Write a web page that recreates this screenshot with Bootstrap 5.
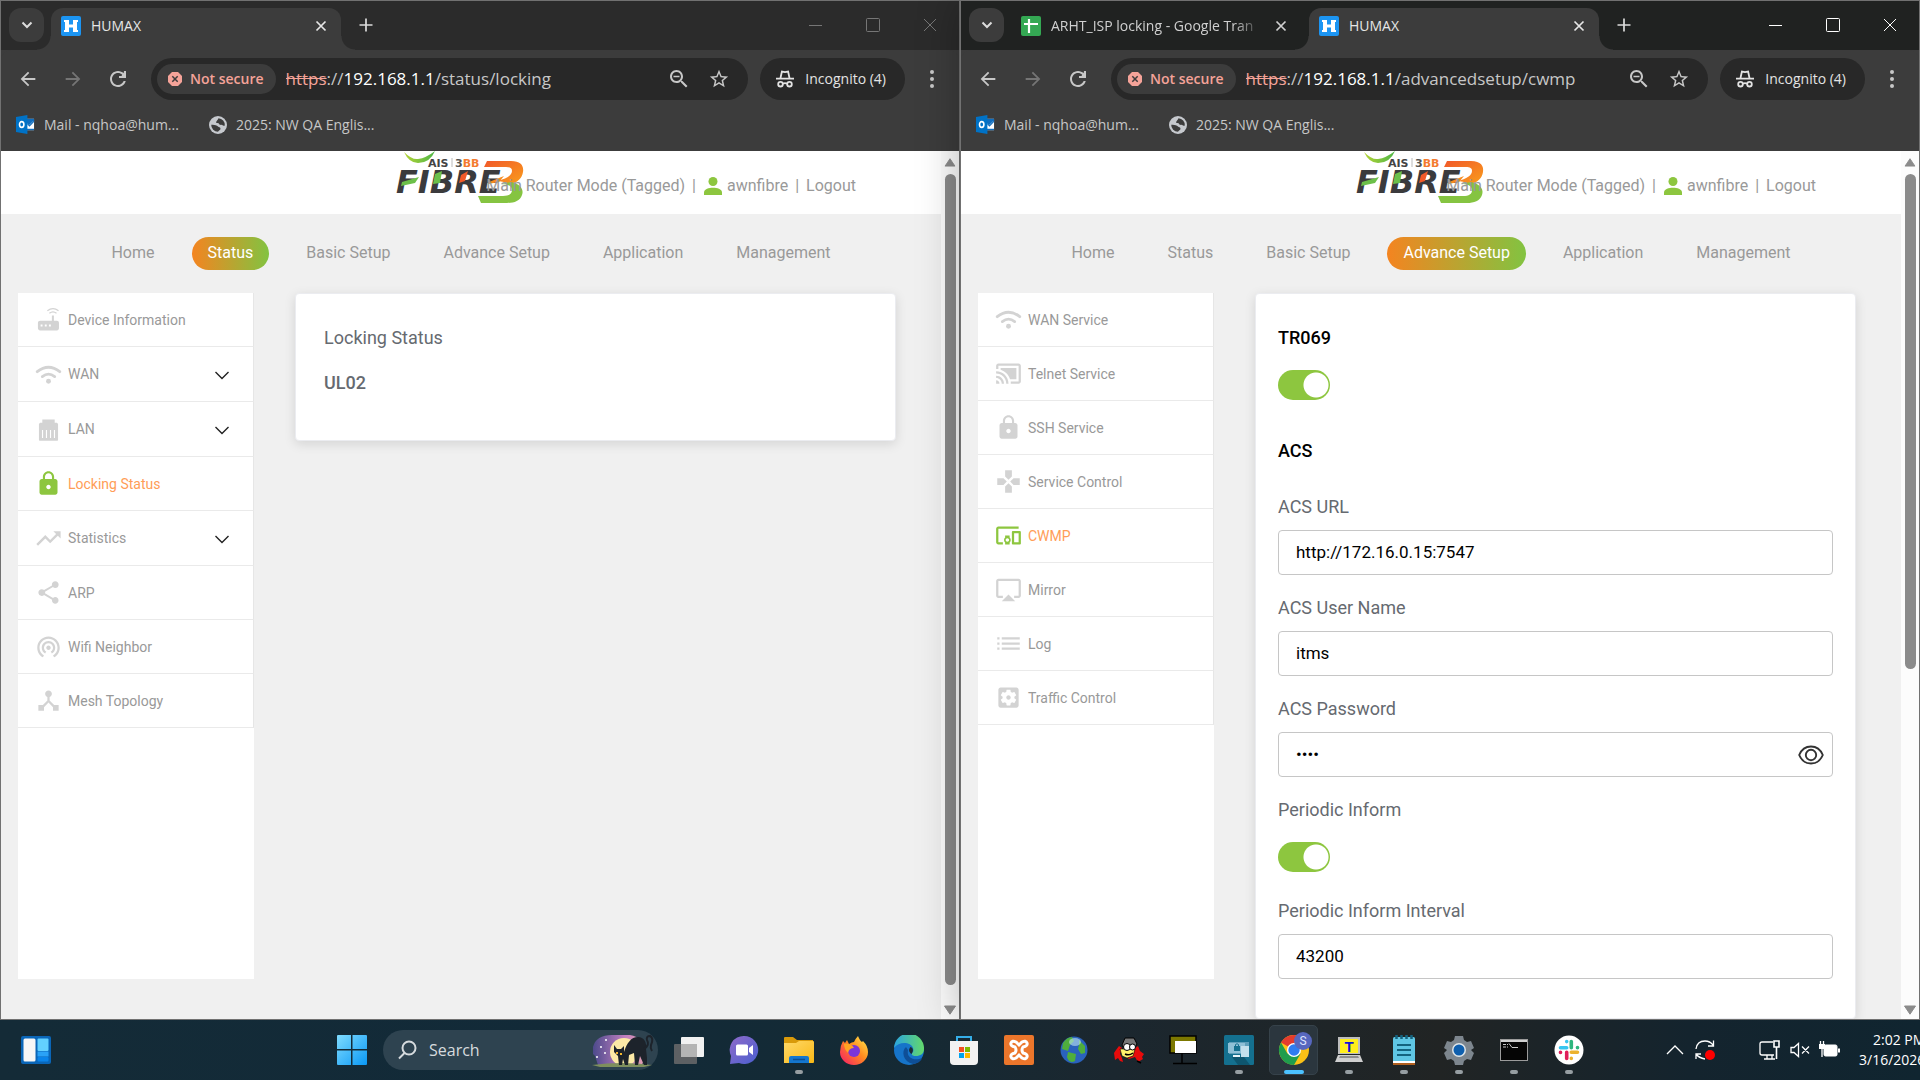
<!DOCTYPE html>
<html lang="en">
<head>
<meta charset="utf-8">
<meta name="viewport" content="width=device-width, initial-scale=1">
<title>HUMAX</title>
<link href="https://cdn.jsdelivr.net/npm/bootstrap@5.3.0/dist/css/bootstrap.min.css" rel="stylesheet">
<script src="https://cdn.jsdelivr.net/npm/bootstrap@5.3.0/dist/js/bootstrap.bundle.min.js" defer></script>
<style>
  body { font-family: Roboto, "Liberation Sans", sans-serif; background: #142a36; color: #999; }
  button { font-family: inherit; }
  .chrome-ui, .taskbar { font-family: "Open Sans", "Noto Sans", sans-serif; }
  .bare { background: none; border: 0; padding: 0; color: inherit; display: flex; align-items: center; justify-content: center; }
  .fill-rest { flex: 1 1 auto; min-height: 0; }

  /* browser windows */
  .window { flex: 1 1 0; min-width: 0; border: 1px solid #717171; background: #3c3c3c; }
  .window-front { z-index: 1; box-shadow: 0 0 40px rgba(0,0,0,.28); }
  .tab-strip { height: 49px; padding: 7px 1px 0 8px; background: #2b2b2b; color: #dcdcdc; }
  .window-front .tab-strip { background: #202221; }
  .tab-search { width: 35px; height: 34px; border-radius: 12px; background: #3c3c3c; margin-right: 7px; }
  .tab-item { width: 290px; height: 42px; padding: 0 12px 7px 10px; gap: 10px; font-size: 14px; line-height: 20px; color: #d0d0d0; margin-right: 8px; }
  .tab-item .tab-title { flex: 1; overflow: hidden; white-space: nowrap; }
  .tab-fade { -webkit-mask-image: linear-gradient(90deg, #000 86%, transparent); mask-image: linear-gradient(90deg, #000 86%, transparent); }
  .tab-current { background: #3c3c3c; border-radius: 12px 12px 0 0; color: #e6e6e6; position: relative; }
  .tab-current::before, .tab-current::after { content: ""; position: absolute; bottom: 0; width: 14px; height: 14px; }
  .tab-current::before { left: -14px; background: radial-gradient(circle at 0 0, transparent 13px, #3c3c3c 14px); }
  .tab-current::after { right: -14px; background: radial-gradient(circle at 100% 0, transparent 13px, #3c3c3c 14px); }
  .tab-close { width: 16px; height: 20px; }
  .new-tab { width: 20px; height: 34px; margin-left: 7px; }
  .win-ctl { width: 57px; height: 34px; color: #767676; }
  .window-front .win-ctl { color: #fff; }
  .toolbar-area { background: #3c3c3c; border-radius: 10px 10px 0 0; }
  .address-row { padding: 8px 18px 0 15px; color: #c7c7c7; }
  .tool-btn { width: 24px; height: 42px; margin-right: 21px; }
  .tool-dim { color: #757575; }
  .omnibox { height: 42px; border-radius: 21px; background: #282828; padding: 0 17px 0 6px; flex: 1; min-width: 0; }
  .chip { height: 30px; border-radius: 15px; background: #3c3c3c; color: #f5a399; font-size: 14px; line-height: 20px; font-weight: 600; padding: 0 12px 0 11px; gap: 8px; white-space: nowrap; }
  .url { font-size: 17px; line-height: 24px; color: #c7c7c7; margin-left: 10px; white-space: nowrap; flex: 1; overflow: hidden; }
  .url b { font-weight: 400; color: #fff; }
  .url s { color: #f5a399; }
  .incognito { height: 42px; border-radius: 21px; background: #282828; color: #e3e3e3; font-size: 14px; line-height: 20px; padding: 0 19px 0 16px; gap: 11px; margin: 0 18px 0 12px; white-space: nowrap; }
  .bookmarks { height: 51px; padding: 0 0 2px 15px; gap: 30px; font-size: 14px; line-height: 20px; }
  .bookmarks a { color: #c7c7c7; text-decoration: none; gap: 9px; white-space: nowrap; }

  /* router page */
  .router { background: #f0f0f0; flex: 1; min-width: 0; }
  .router-head { height: 63px; background: #fff; padding: 6px 85px 0; gap: 7px; font-size: 16px; line-height: 24px; position: relative; }
  .router-head a, .router-head span { color: #999; text-decoration: none; white-space: nowrap; position: relative; }
  .account { gap: 4px; }
  .brand-logo { position: absolute; left: 394px; top: 0; }
  .router-nav { padding: 23px 0; gap: 21px; flex-wrap: nowrap; }
  .router-nav .nav-link { height: 33px; padding: 4px 16px; border-radius: 17px; font-size: 16px; line-height: 24px; color: #999; white-space: nowrap; }
  .router-nav .nav-link.active { background: linear-gradient(90deg, #f48420, #82c341); color: #fff; }
  .router-body { padding: 0 45px 0 17px; gap: 41px; flex: 1; min-height: 0; }
  .side { width: 236px; background: #fff; margin-bottom: 40px; font-size: 14px; line-height: 20px; }
  .side a { height: 54px; padding: 0 23px 0 17px; gap: 6px; color: #999; text-decoration: none; border-bottom: 1px solid #eaeaea; border-right: 1px solid #e6e6e6; }
  .side a.has-sub { height: 55px; }
  .side svg { flex: none; color: #d3d3d3; }
  .side .chev { color: #222; margin-left: auto; }
  .side a.on { color: #ff9d57; }
  .side a.on svg { color: #8dc63f; }
  .panel { flex: 1; min-width: 0; background: #fff; border: 1px solid #ebecf0; border-radius: 4px; box-shadow: 0 3px 12px rgba(0,0,0,.12); color: #666a70; font-size: 18px; line-height: 24px; }
  .panel-lock { align-self: flex-start; padding: 32px 28px 45px; }
  .lock-title { margin-bottom: 21px; }
  .lock-value { font-weight: 500; }
  .panel-form { padding: 32px 22px 0; }
  .panel-form h2 { font-size: 18px; line-height: 24px; font-weight: 500; color: #000; margin: 0; }
  .field { height: 101px; }
  .field label { display: block; margin-bottom: 11px; }
  .field .switch-label { margin-bottom: 20px; }
  .field .form-control { height: 45px; border: 1px solid #c6c6c6; border-radius: 4px; padding: 0 17px 2px; font-size: 17px; line-height: 24px; color: #000; box-shadow: none; }
  .eye { position: absolute; right: 9px; top: 0; height: 45px; color: #333; }
  .onoff.form-check-input { display: block; width: 52px; height: 30px; margin: 0; border: 0; border-radius: 15px; background-color: #8dc63f; background-image: radial-gradient(circle at 38px 15px, #fff 12px, transparent 13px); background-size: auto; box-shadow: none; }
  .onoff.first-switch { margin: 20px 0 39px; }
  .acs-head { padding-bottom: 32px; }
  .scroll { width: 18px; background: #fcfcfc; padding: 7px 0 4px; color: #8b8b8b; }
  .scroll-track { flex: 1; margin: 7px 0 20px; }
  .thumb { width: 11px; height: 100%; border-radius: 6px; background: #8b8b8b; margin-left: 1px; }
  .thumb-half { height: 61%; }

  /* taskbar */
  .taskbar { height: 60px; z-index: 2; position: relative; background: linear-gradient(90deg, #142b37 0%, #122a38 30%, #142a35 45%, #1b272f 58%, #212424 75%, #14242e 88%, #102530 100%); }
  .task-end { flex: 1 1 0; min-width: 0; overflow: hidden; }
  .widgets { margin-left: 21px; }
  .start-cell { width: 55px; height: 60px; margin-right: 4px; }
  .task-search { width: 275px; height: 40px; border-radius: 20px; background: #2e4350; padding: 0 2px 0 14px; gap: 12px; margin-right: 3px; color: #d6dbde; }
  .task-search input { background: none; border: 0; width: 0; flex: 1; color: #d6dbde; font-size: 16px; line-height: 20px; padding: 0; outline: 0; }
  .task-search input::placeholder { color: #d6dbde; opacity: 1; }
  .app { width: 55px; height: 60px; position: relative; }
  .app.running::after { content: ""; position: absolute; left: 50%; bottom: 6px; width: 8px; height: 4px; margin-left: -4px; border-radius: 2px; background: #969ea2; }
  .app.focused::after { width: 20px; margin-left: -10px; background: #4cc2ff; }
  .focus-plate { position: absolute; left: 3px; top: 5px; width: 49px; height: 50px; border-radius: 5px; background: #2b363e; border: 1px solid #36424a; }
  .app svg { position: relative; }
  .tray { color: #fff; }
  .tray .bare { width: 30px; height: 40px; flex: none; }
  .tray .tray-first { margin-left: 64px; }
  .tray .tray-gap { margin-right: 35px; }
  .clock { flex: none; margin-left: 14px; font-size: 14px; line-height: 20px; text-align: right; white-space: nowrap; }
</style>
</head>
<body>
<svg width="0" height="0" class="position-absolute" aria-hidden="true">
  <defs>
    <linearGradient id="gGreen" x1="0" y1="0" x2="1" y2="0"><stop offset="0" stop-color="#b5d334"/><stop offset="1" stop-color="#4db748"/></linearGradient>
    <linearGradient id="gOrange" x1="0" y1="0" x2="1" y2="1"><stop offset="0" stop-color="#f1592a"/><stop offset="1" stop-color="#f99d1c"/></linearGradient>
    <linearGradient id="gWin" x1="0" y1="0" x2="1" y2="1"><stop offset="0" stop-color="#7fdcff"/><stop offset="1" stop-color="#0a98f5"/></linearGradient>
    <linearGradient id="gEdge" x1="0" y1="0" x2="1" y2="0"><stop offset="0" stop-color="#2ba4e0"/><stop offset="1" stop-color="#63d96a"/></linearGradient>
    <linearGradient id="gFox" x1="1" y1="0" x2="0" y2="1"><stop offset="0" stop-color="#fff14f"/><stop offset=".45" stop-color="#ff8a1f"/><stop offset="1" stop-color="#f5156c"/></linearGradient>
    <linearGradient id="gMoon" x1="0" y1="0" x2="1" y2="0"><stop offset="0" stop-color="#4d4a8c"/><stop offset=".6" stop-color="#c07fc0"/><stop offset="1" stop-color="#e8a3b0"/></linearGradient>
    <linearGradient id="gChat" x1="0" y1="0" x2="1" y2="1"><stop offset="0" stop-color="#8f6ac9"/><stop offset="1" stop-color="#4a5fd0"/></linearGradient>
    <linearGradient id="gFolder" x1="0" y1="0" x2="1" y2="1"><stop offset="0" stop-color="#ffd868"/><stop offset="1" stop-color="#f9b916"/></linearGradient>
  </defs>
  <symbol id="i-chev" viewBox="0 0 16 16"><path d="M1.500 6l6.500 6.500L14.500 6" fill="none" stroke="currentColor" stroke-width="1.400"/></symbol>
  <symbol id="i-tabchev" viewBox="0 0 12 12"><path d="M1.500 3.500L6 8l4.500-4.500" fill="none" stroke="currentColor" stroke-width="2"/></symbol>
  <symbol id="i-x" viewBox="0 0 12 12"><path d="M1.500 1.500l9 9M10.500 1.500l-9 9" stroke="currentColor" stroke-width="1.700"/></symbol>
  <symbol id="i-plus" viewBox="0 0 14 14"><path d="M7 .5v13M.5 7h13" stroke="currentColor" stroke-width="1.700"/></symbol>
  <symbol id="i-humax" viewBox="0 0 20 20"><rect width="20" height="20" rx="2" fill="#1c95f3"/><path d="M3 4h5v4.500h4V4h5v2h-1v8h1v2h-5v-4.500H8V16H3v-2h1V6H3z" fill="#fff"/></symbol>
  <symbol id="i-sheet" viewBox="0 0 20 20"><rect width="20" height="20" rx="2" fill="#34a853"/><path d="M8 3v14M3 8h14" stroke="#fff" stroke-width="2.200"/></symbol>
  <symbol id="i-back" viewBox="0 0 24 24"><path fill="currentColor" d="M20 11H7.830l5.590-5.590L12 4l-8 8 8 8 1.410-1.410L7.830 13H20v-2z"/></symbol>
  <symbol id="i-reload" viewBox="0 0 24 24"><path fill="currentColor" d="M17.650 6.350C16.200 4.900 14.210 4 12 4c-4.420 0-7.990 3.580-7.990 8s3.570 8 7.990 8c3.730 0 6.840-2.550 7.730-6h-2.080c-.82 2.330-3.040 4-5.650 4-3.310 0-6-2.690-6-6s2.690-6 6-6c1.660 0 3.140.69 4.220 1.780L15.500 9H13v2h7V4h-2z"/></symbol>
  <symbol id="i-notsec" viewBox="0 0 14 14"><path d="M4 0h6l4 4v6l-4 4H4l-4-4V4z" fill="currentColor"/><path d="M4.300 4.300l5.400 5.400M9.700 4.300L4.300 9.700" stroke="#3c3c3c" stroke-width="1.500"/></symbol>
  <symbol id="i-zoomout" viewBox="0 0 24 24"><path fill="currentColor" d="M15.500 14h-.79l-.28-.27C15.410 12.590 16 11.110 16 9.500 16 5.910 13.090 3 9.500 3S3 5.910 3 9.500 5.910 16 9.500 16c1.610 0 3.090-.59 4.230-1.570l.27.28v.79l5 4.990L20.490 19l-4.990-5zm-6 0C7.010 14 5 11.990 5 9.500S7.010 5 9.500 5 14 7.010 14 9.500 11.990 14 9.500 14zM6.500 8.700h6v1.600h-6z"/></symbol>
  <symbol id="i-star" viewBox="0 0 24 24"><path fill="currentColor" d="M22 9.240l-7.190-.62L12 2 9.190 8.630 2 9.240l5.460 4.730L5.820 21 12 17.270 18.180 21l-1.630-7.030L22 9.240zM12 15.400l-3.760 2.270 1-4.280-3.320-2.880 4.380-.38L12 6.100l1.710 4.040 4.380.38-3.320 2.880 1 4.280L12 15.400z"/></symbol>
  <symbol id="i-incog" viewBox="0 0 18 18"><g fill="none" stroke="currentColor" stroke-width="1.800"><path d="M4.500 8L5.900 1.600l3.100.6 3.100-.6L13.500 8M0 8.700h18"/><circle cx="4.500" cy="14.200" r="2.300"/><circle cx="13.500" cy="14.200" r="2.300"/><path d="M6.800 13.600q2.200-1 4.400 0"/></g></symbol>
  <symbol id="i-outlook" viewBox="0 0 20 20"><path d="M10 4h9v12h-9z" fill="#fff"/><path d="M10 4h9v1.500l-5 5-4-3z" fill="#0f6cbd"/><path d="M12 9l2.200 2.500L19 6.500" stroke="#0f6cbd" stroke-width="1.300" fill="none"/><path d="M10 14.500h9V16h-9z" fill="#0f6cbd"/><path d="M0 2.200L12 0v20L0 17.800z" fill="#0072c6"/><ellipse cx="6" cy="10" rx="2.300" ry="3" fill="none" stroke="#fff" stroke-width="1.700"/></symbol>
  <symbol id="i-globe" viewBox="0 0 18 18"><circle cx="9" cy="9" r="9" fill="#c6c9ce"/><path d="M9.500 2.200a6.800 6.800 0 0 1 6.300 7.300c-1 .5-2 .2-2.800-.7-1.500.4-3-.2-3.300-1.600L7 6.800C7.200 5 8.800 4 9.500 2.200zM2.200 8.800c2.200-.5 5.500.2 6.800 1.700.6 1 2.500.6 2.500 2.200 0 1.500-2 1.500-2.500 3.100A6.900 6.900 0 0 1 2.200 8.800z" fill="#3c3c3c"/></symbol>
  <symbol id="i-user" viewBox="0 0 18 18"><circle cx="9" cy="4.500" r="4.500" fill="#8dc63f"/><path d="M0 18v-2.500C0 12 5 10.800 9 10.800s9 1.200 9 4.700V18z" fill="#8dc63f"/></symbol>
  <symbol id="i-up" viewBox="0 0 12 10"><path d="M6 .8L11.500 9H.5z" fill="currentColor" stroke="currentColor" stroke-linejoin="round"/></symbol>
  <symbol id="i-down" viewBox="0 0 12 10"><path d="M6 9.200L.5 1h11z" fill="currentColor" stroke="currentColor" stroke-linejoin="round"/></symbol>
  <symbol id="i-router" viewBox="0 0 24 24"><path fill="currentColor" d="M4.500 13H15V8.500h1.800V13h2.700c1 0 1.800.8 1.800 1.800v5c0 1-.8 1.900-1.800 1.900h-15c-1 0-1.900-.9-1.900-1.900v-5c0-1 .9-1.800 1.900-1.800zM5 16.500v1.700h1.700v-1.700zm3.700 0v1.700h1.700v-1.700zm3.700 0v1.700h1.700v-1.700z"/><path d="M11 4.300q5-4 9.900 0M12.800 6.400q3.200-2.500 6.300 0" fill="none" stroke="currentColor" stroke-width="1.100"/></symbol>
  <symbol id="i-wifi" viewBox="0 0 24 24"><g fill="none" stroke="currentColor" stroke-width="2.500" stroke-linecap="round"><path d="M2 9.500q10-8 20 0"/><path d="M6.500 13.800q5.500-4.300 11 0"/></g><circle cx="12" cy="18" r="2.200" fill="currentColor"/></symbol>
  <symbol id="i-lan" viewBox="0 0 24 24"><path fill="currentColor" d="M6.500 3h11v3h2l1 1v14c0 .6-.4 1-1 1h-15c-.6 0-1-.4-1-1V7l1-1h2z"/><path d="M6.700 12.500v7M10.200 12.500v7M13.800 12.500v7M17.300 12.500v7" stroke="#fff" stroke-width="1"/></symbol>
  <symbol id="i-lock" viewBox="0 0 24 24"><path fill="currentColor" d="M18 8h-1V6c0-2.760-2.240-5-5-5S7 3.240 7 6v2H6c-1.100 0-2 .9-2 2v10c0 1.100.9 2 2 2h12c1.100 0 2-.9 2-2V10c0-1.100-.9-2-2-2zm-6 9c-1.100 0-2-.9-2-2s.9-2 2-2 2 .9 2 2-.9 2-2 2zm3.100-9H8.900V6c0-1.710 1.390-3.100 3.100-3.100 1.710 0 3.100 1.390 3.100 3.100v2z"/></symbol>
  <symbol id="i-trend" viewBox="0 0 24 24"><path fill="currentColor" d="M16 6l2.290 2.290-4.880 4.880-4-4L2 16.590 3.410 18l6-6 4 4 6.300-6.290L22 12V6z" transform="translate(-1 -1) scale(1.080)"/></symbol>
  <symbol id="i-share" viewBox="0 0 24 24"><path fill="currentColor" d="M18 16.080c-.76 0-1.440.3-1.960.77L8.910 12.700c.05-.23.09-.46.09-.7s-.04-.47-.09-.7l7.050-4.110c.54.5 1.250.81 2.040.81 1.660 0 3-1.340 3-3s-1.340-3-3-3-3 1.340-3 3c0 .24.04.47.09.7L8.040 9.810C7.500 9.310 6.790 9 6 9c-1.660 0-3 1.340-3 3s1.340 3 3 3c.79 0 1.500-.31 2.040-.81l7.120 4.160c-.05.21-.08.43-.08.65 0 1.610 1.310 2.920 2.920 2.920 1.610 0 2.920-1.310 2.920-2.920s-1.310-2.920-2.920-2.920z"/></symbol>
  <symbol id="i-tether" viewBox="0 0 24 24"><path fill="currentColor" d="M12 11c-1.100 0-2 .9-2 2s.9 2 2 2 2-.9 2-2-.9-2-2-2zm6 2c0-3.310-2.690-6-6-6s-6 2.690-6 6c0 2.220 1.210 4.150 3 5.190l1-1.740c-1.190-.7-2-1.970-2-3.450 0-2.210 1.790-4 4-4s4 1.790 4 4c0 1.480-.81 2.750-2 3.450l1 1.740c1.790-1.040 3-2.970 3-5.190zM12 3C6.480 3 2 7.480 2 13c0 3.700 2.010 6.920 4.990 8.650l1-1.730C5.610 18.530 4 15.960 4 13c0-4.420 3.580-8 8-8s8 3.580 8 8c0 2.960-1.610 5.530-4 6.920l1 1.730c2.990-1.730 5-4.950 5-8.650 0-5.520-4.480-10-10-10z"/></symbol>
  <symbol id="i-hub" viewBox="0 0 24 24"><path fill="currentColor" d="M17 16l-4-4V8.820C14.160 8.400 15 7.300 15 6c0-1.660-1.340-3-3-3S9 4.340 9 6c0 1.300.84 2.400 2 2.820V12l-4 4H3v5h5v-3.050l4-4.200 4 4.200V21h5v-5h-4z"/></symbol>
  <symbol id="i-cast" viewBox="0 0 24 24"><path fill="currentColor" d="M1 18v3h3c0-1.660-1.340-3-3-3zm0-4v2c2.760 0 5 2.240 5 5h2c0-3.870-3.130-7-7-7zm18-7H5v1.630c3.960 1.280 7.090 4.410 8.370 8.370H19V7zM1 10v2c4.970 0 9 4.030 9 9h2c0-6.080-4.930-11-11-11zm20-7H3c-1.100 0-2 .9-2 2v3h2V5h18v14h-7v2h7c1.100 0 2-.9 2-2V5c0-1.100-.9-2-2-2z"/></symbol>
  <symbol id="i-pad" viewBox="0 0 24 24"><path fill="currentColor" d="M15 7.500V2H9v5.500l3 3 3-3zM7.500 9H2v6h5.500l3-3-3-3zM9 16.500V22h6v-5.500l-3-3-3 3zM16.500 9l-3 3 3 3H22V9h-5.500z"/></symbol>
  <symbol id="i-devices" viewBox="0 0 24 24"><path fill="currentColor" d="M3 6h18V4H3c-1.100 0-2 .9-2 2v12c0 1.100.9 2 2 2h4v-2H3V6zm10 6H9v1.780c-.61.550-1 1.330-1 2.220s.39 1.670 1 2.220V20h4v-1.780c.61-.55 1-1.340 1-2.220s-.39-1.670-1-2.220V12zm-2 5.500c-.83 0-1.500-.67-1.500-1.500s.67-1.500 1.500-1.500 1.500.67 1.500 1.500-.67 1.500-1.500 1.500zM22 8h-6c-.5 0-1 .5-1 1v10c0 .5.5 1 1 1h6c.5 0 1-.5 1-1V9c0-.5-.5-1-1-1zm-1 10h-4v-8h4v8z"/></symbol>
  <symbol id="i-mirror" viewBox="0 0 24 24"><path fill="currentColor" d="M6 22.500h12l-6-6zM21 2.500H3c-1.100 0-2 .9-2 2v13c0 1.100.9 2 2 2h4v-2H3v-13h18v13h-4v2h4c1.100 0 2-.9 2-2v-13c0-1.100-.9-2-2-2z"/></symbol>
  <symbol id="i-list" viewBox="0 0 24 24"><path fill="currentColor" d="M2 13h2v-2H2v2zm0 4.500h2v-2H2v2zM2 8.500h2v-2H2v2zM6 13h16v-2H6v2zm0 4.500h16v-2H6v2zM6 6.500v2h16v-2H6z"/></symbol>
  <symbol id="i-cog" viewBox="0 0 24 24"><path fill="currentColor" d="M12 10c-1.100 0-2 .9-2 2s.9 2 2 2 2-.9 2-2-.9-2-2-2zm7-7H5c-1.110 0-2 .9-2 2v14c0 1.100.89 2 2 2h14c1.110 0 2-.9 2-2V5c0-1.100-.89-2-2-2zm-1.750 9c0 .23-.02.46-.05.68l1.480 1.160c.13.11.17.3.08.45l-1.400 2.420c-.09.15-.27.21-.43.15l-1.740-.7c-.36.28-.76.51-1.180.69l-.26 1.850c-.03.17-.18.3-.35.3h-2.800c-.17 0-.32-.13-.35-.29l-.26-1.850c-.43-.18-.82-.41-1.180-.69l-1.740.7c-.16.06-.34 0-.43-.15l-1.400-2.420c-.09-.15-.05-.34.08-.45l1.480-1.160c-.03-.23-.05-.46-.05-.69 0-.23.02-.46.05-.68l-1.480-1.160c-.13-.11-.17-.3-.08-.45l1.400-2.420c.09-.15.27-.21.43-.15l1.740.7c.36-.28.76-.51 1.180-.69l.26-1.850c.03-.17.18-.3.35-.3h2.800c.17 0 .32.13.35.29l.26 1.850c.43.18.82.41 1.180.69l1.740-.7c.16-.06.34 0 .43.15l1.400 2.420c.09.15.05.34-.08.45l-1.480 1.160c.03.23.05.46.05.69z"/></symbol>
  <symbol id="i-eye" viewBox="0 0 26 20"><g fill="none" stroke="currentColor" stroke-width="1.900"><path d="M1.200 10C3.500 4.500 8 1.500 13 1.500S22.500 4.500 24.800 10C22.500 15.500 18 18.500 13 18.500S3.500 15.500 1.200 10z"/><circle cx="13" cy="10" r="5.200"/></g></symbol>
  <symbol id="logo-swoosh" viewBox="0 0 134 56">
    <path d="M9 1q8 8 14 7Q31 7 40 0q-5 12-17 12Q14 12 9 1z" fill="url(#gGreen)"/>
    <path d="M57 7v9" stroke="#bbb" stroke-width="1"/>
    <path d="M92 10h24c10 0 13 5 12 11-1 6-5 10-12 12-6-2-11-3-14-3 10-2 15-6 15-10 0-3-2-4-6-4H89z" fill="url(#gOrange)"/>
    <path d="M116 31c10 2 13 8 11 13-2 6-8 8-15 8H86l-3-7h25c6 0 9-2 9-6s-4-6-11-6z" fill="#85c441"/>
  </symbol>
  <symbol id="logo-accents" viewBox="0 0 134 56">
    <path d="M7 31l17-5-4 6-14 3z" fill="#6cc04a"/><path d="M40 23l7-3-2 12-7 1z" fill="#6cc04a"/><path d="M66 24l7-4-3 10-6 2z" fill="#f15a29"/><path d="M94 31l15-6-5 6-11 2z" fill="#f68b1f"/>
  </symbol>
</svg>

<div class="vh-100 d-flex flex-column overflow-hidden">
  <main class="d-flex fill-rest">

    <!-- left browser window -->
    <section class="window d-flex flex-column" aria-label="Locking status window">
      <div class="chrome-ui">
        <div class="tab-strip d-flex">
          <button class="bare tab-search" aria-label="Search tabs"><svg width="12" height="12"><use href="#i-tabchev"/></svg></button>
          <div class="tab-item tab-current d-flex align-items-center">
            <svg width="20" height="20"><use href="#i-humax"/></svg><span class="tab-title">HUMAX</span>
            <button class="bare tab-close" aria-label="Close tab"><svg width="12" height="12"><use href="#i-x"/></svg></button>
          </div>
          <button class="bare new-tab" aria-label="New tab"><svg width="14" height="14"><use href="#i-plus"/></svg></button>
          <div class="d-flex ms-auto">
            <button class="bare win-ctl" aria-label="Minimize"><svg width="13" height="13"><path d="M0 6.500h13" stroke="currentColor"/></svg></button>
            <button class="bare win-ctl" aria-label="Maximize"><svg width="14" height="14"><rect x=".5" y=".5" width="13" height="13" rx="1" fill="none" stroke="currentColor"/></svg></button>
            <button class="bare win-ctl" aria-label="Close"><svg width="14" height="14"><path d="M1 1l12 12M13 1L1 13" stroke="currentColor"/></svg></button>
          </div>
        </div>
        <div class="toolbar-area">
          <div class="address-row d-flex">
            <button class="bare tool-btn" aria-label="Back"><svg width="22" height="22"><use href="#i-back"/></svg></button>
            <button class="bare tool-btn tool-dim" aria-label="Forward"><svg width="22" height="22" viewBox="0 0 22 22"><g transform="translate(22 0) scale(-1 1)"><use href="#i-back" width="22" height="22"/></g></svg></button>
            <button class="bare tool-btn" aria-label="Reload"><svg width="24" height="24"><use href="#i-reload"/></svg></button>
            <div class="omnibox d-flex align-items-center">
              <button class="bare chip"><svg width="14" height="14"><use href="#i-notsec"/></svg>Not secure</button>
              <div class="url"><s>https</s>://<b>192.168.1.1</b>/status/locking</div>
              <button class="bare me-3" aria-label="Zoom"><svg width="24" height="24"><use href="#i-zoomout"/></svg></button>
              <button class="bare" aria-label="Bookmark"><svg width="24" height="22"><use href="#i-star"/></svg></button>
            </div>
            <button class="bare incognito"><svg width="18" height="18"><use href="#i-incog"/></svg>Incognito (4)</button>
            <button class="bare" aria-label="Menu"><svg width="18" height="18" fill="currentColor"><circle cx="9" cy="2" r="2"/><circle cx="9" cy="9" r="2"/><circle cx="9" cy="16" r="2"/></svg></button>
          </div>
          <div class="bookmarks d-flex align-items-center">
            <a href="#" class="d-flex align-items-center"><svg width="19" height="19"><use href="#i-outlook"/></svg>Mail - nqhoa@hum...</a>
            <a href="#" class="d-flex align-items-center"><svg width="18" height="18"><use href="#i-globe"/></svg>2025: NW QA Englis...</a>
          </div>
        </div>
      </div>
      <div class="d-flex fill-rest">
        <div class="router d-flex flex-column overflow-hidden">
          <header class="router-head d-flex align-items-center justify-content-end">
            <svg class="brand-logo" width="134" height="56" role="img" aria-label="AIS 3BB FIBRE3">
              <use href="#logo-swoosh"/>
              <g font-family="DejaVu Sans" font-weight="700" font-size="11"><text x="33" y="16" fill="#444">AIS</text><text x="60" y="16" fill="#555">3<tspan fill="#f47b30">BB</tspan></text></g>
              <text x="1" y="42" font-family="DejaVu Sans" font-style="italic" font-weight="700" font-size="32" fill="#3b3b3d">FIBRE</text>
              <use href="#logo-accents"/>
            </svg>
            <span>Main Router Mode (Tagged)</span><span>|</span>
            <a href="#" class="account d-flex align-items-center"><svg width="20" height="18"><use href="#i-user"/></svg>awnfibre</a><span>|</span><a href="#">Logout</a>
          </header>
          <nav class="nav nav-pills router-nav justify-content-center">
            <a class="nav-link" href="#">Home</a><a class="nav-link active" href="#">Status</a><a class="nav-link" href="#">Basic Setup</a><a class="nav-link" href="#">Advance Setup</a><a class="nav-link" href="#">Application</a><a class="nav-link" href="#">Management</a>
          </nav>
          <div class="router-body d-flex">
            <nav class="side flex-shrink-0">
              <a href="#" class="d-flex align-items-center"><svg width="27" height="27"><use href="#i-router"/></svg>Device Information</a>
              <a href="#" class="has-sub d-flex align-items-center"><svg width="27" height="27"><use href="#i-wifi"/></svg>WAN<svg class="chev" width="16" height="16"><use href="#i-chev"/></svg></a>
              <a href="#" class="has-sub d-flex align-items-center"><svg width="27" height="27"><use href="#i-lan"/></svg>LAN<svg class="chev" width="16" height="16"><use href="#i-chev"/></svg></a>
              <a href="#" class="on d-flex align-items-center"><svg width="27" height="27"><use href="#i-lock"/></svg>Locking Status</a>
              <a href="#" class="has-sub d-flex align-items-center"><svg width="27" height="27"><use href="#i-trend"/></svg>Statistics<svg class="chev" width="16" height="16"><use href="#i-chev"/></svg></a>
              <a href="#" class="d-flex align-items-center"><svg width="27" height="27"><use href="#i-share"/></svg>ARP</a>
              <a href="#" class="d-flex align-items-center"><svg width="27" height="27"><use href="#i-tether"/></svg>Wifi Neighbor</a>
              <a href="#" class="d-flex align-items-center"><svg width="27" height="27"><use href="#i-hub"/></svg>Mesh Topology</a>
            </nav>
            <div class="panel panel-lock">
              <div class="lock-title">Locking Status</div>
              <div class="lock-value">UL02</div>
            </div>
          </div>
        </div>
        <div class="scroll d-flex flex-column align-items-center" aria-hidden="true">
          <svg width="12" height="9"><use href="#i-up"/></svg><div class="scroll-track"><div class="thumb"></div></div><svg width="12" height="10"><use href="#i-down"/></svg>
        </div>
      </div>
    </section>

    <!-- right browser window -->
    <section class="window window-front d-flex flex-column" aria-label="CWMP window">
      <div class="chrome-ui">
        <div class="tab-strip d-flex">
          <button class="bare tab-search" aria-label="Search tabs"><svg width="12" height="12"><use href="#i-tabchev"/></svg></button>
          <div class="tab-item d-flex align-items-center">
            <svg width="20" height="20"><use href="#i-sheet"/></svg><span class="tab-title tab-fade">ARHT_ISP locking - Google Tran</span>
            <button class="bare tab-close" aria-label="Close tab"><svg width="12" height="12"><use href="#i-x"/></svg></button>
          </div>
          <div class="tab-item tab-current d-flex align-items-center">
            <svg width="20" height="20"><use href="#i-humax"/></svg><span class="tab-title">HUMAX</span>
            <button class="bare tab-close" aria-label="Close tab"><svg width="12" height="12"><use href="#i-x"/></svg></button>
          </div>
          <button class="bare new-tab" aria-label="New tab"><svg width="14" height="14"><use href="#i-plus"/></svg></button>
          <div class="d-flex ms-auto">
            <button class="bare win-ctl" aria-label="Minimize"><svg width="13" height="13"><path d="M0 6.500h13" stroke="currentColor"/></svg></button>
            <button class="bare win-ctl" aria-label="Maximize"><svg width="14" height="14"><rect x=".5" y=".5" width="13" height="13" rx="1" fill="none" stroke="currentColor"/></svg></button>
            <button class="bare win-ctl" aria-label="Close"><svg width="14" height="14"><path d="M1 1l12 12M13 1L1 13" stroke="currentColor"/></svg></button>
          </div>
        </div>
        <div class="toolbar-area">
          <div class="address-row d-flex">
            <button class="bare tool-btn" aria-label="Back"><svg width="22" height="22"><use href="#i-back"/></svg></button>
            <button class="bare tool-btn tool-dim" aria-label="Forward"><svg width="22" height="22" viewBox="0 0 22 22"><g transform="translate(22 0) scale(-1 1)"><use href="#i-back" width="22" height="22"/></g></svg></button>
            <button class="bare tool-btn" aria-label="Reload"><svg width="24" height="24"><use href="#i-reload"/></svg></button>
            <div class="omnibox d-flex align-items-center">
              <button class="bare chip"><svg width="14" height="14"><use href="#i-notsec"/></svg>Not secure</button>
              <div class="url"><s>https</s>://<b>192.168.1.1</b>/advancedsetup/cwmp</div>
              <button class="bare me-3" aria-label="Zoom"><svg width="24" height="24"><use href="#i-zoomout"/></svg></button>
              <button class="bare" aria-label="Bookmark"><svg width="24" height="22"><use href="#i-star"/></svg></button>
            </div>
            <button class="bare incognito"><svg width="18" height="18"><use href="#i-incog"/></svg>Incognito (4)</button>
            <button class="bare" aria-label="Menu"><svg width="18" height="18" fill="currentColor"><circle cx="9" cy="2" r="2"/><circle cx="9" cy="9" r="2"/><circle cx="9" cy="16" r="2"/></svg></button>
          </div>
          <div class="bookmarks d-flex align-items-center">
            <a href="#" class="d-flex align-items-center"><svg width="19" height="19"><use href="#i-outlook"/></svg>Mail - nqhoa@hum...</a>
            <a href="#" class="d-flex align-items-center"><svg width="18" height="18"><use href="#i-globe"/></svg>2025: NW QA Englis...</a>
          </div>
        </div>
      </div>
      <div class="d-flex fill-rest">
        <div class="router d-flex flex-column overflow-hidden">
          <header class="router-head d-flex align-items-center justify-content-end">
            <svg class="brand-logo" width="134" height="56" role="img" aria-label="AIS 3BB FIBRE3">
              <use href="#logo-swoosh"/>
              <g font-family="DejaVu Sans" font-weight="700" font-size="11"><text x="33" y="16" fill="#444">AIS</text><text x="60" y="16" fill="#555">3<tspan fill="#f47b30">BB</tspan></text></g>
              <text x="1" y="42" font-family="DejaVu Sans" font-style="italic" font-weight="700" font-size="32" fill="#3b3b3d">FIBRE</text>
              <use href="#logo-accents"/>
            </svg>
            <span>Main Router Mode (Tagged)</span><span>|</span>
            <a href="#" class="account d-flex align-items-center"><svg width="20" height="18"><use href="#i-user"/></svg>awnfibre</a><span>|</span><a href="#">Logout</a>
          </header>
          <nav class="nav nav-pills router-nav justify-content-center">
            <a class="nav-link" href="#">Home</a><a class="nav-link" href="#">Status</a><a class="nav-link" href="#">Basic Setup</a><a class="nav-link active" href="#">Advance Setup</a><a class="nav-link" href="#">Application</a><a class="nav-link" href="#">Management</a>
          </nav>
          <div class="router-body d-flex">
            <nav class="side flex-shrink-0">
              <a href="#" class="d-flex align-items-center"><svg width="27" height="27"><use href="#i-wifi"/></svg>WAN Service</a>
              <a href="#" class="d-flex align-items-center"><svg width="27" height="27"><use href="#i-cast"/></svg>Telnet Service</a>
              <a href="#" class="d-flex align-items-center"><svg width="27" height="27"><use href="#i-lock"/></svg>SSH Service</a>
              <a href="#" class="d-flex align-items-center"><svg width="27" height="27"><use href="#i-pad"/></svg>Service Control</a>
              <a href="#" class="on d-flex align-items-center"><svg width="27" height="27"><use href="#i-devices"/></svg>CWMP</a>
              <a href="#" class="d-flex align-items-center"><svg width="27" height="27"><use href="#i-mirror"/></svg>Mirror</a>
              <a href="#" class="d-flex align-items-center"><svg width="27" height="27"><use href="#i-list"/></svg>Log</a>
              <a href="#" class="d-flex align-items-center"><svg width="27" height="27"><use href="#i-cog"/></svg>Traffic Control</a>
            </nav>
            <form class="panel panel-form">
              <h2 id="tr">TR069</h2>
              <input class="form-check-input onoff first-switch" type="checkbox" role="switch" checked aria-labelledby="tr">
              <h2 class="acs-head">ACS</h2>
              <div class="field"><label for="f-url">ACS URL</label><input id="f-url" class="form-control" type="text" value="http://172.16.0.15:7547"></div>
              <div class="field"><label for="f-user">ACS User Name</label><input id="f-user" class="form-control" type="text" value="itms"></div>
              <div class="field"><label for="f-pass">ACS Password</label>
                <div class="position-relative"><input id="f-pass" class="form-control" type="password" value="itms"><button type="button" class="bare eye" aria-label="Show password"><svg width="26" height="20"><use href="#i-eye"/></svg></button></div></div>
              <div class="field"><label for="f-per" class="switch-label">Periodic Inform</label><input id="f-per" class="form-check-input onoff" type="checkbox" role="switch" checked></div>
              <div class="field"><label for="f-int">Periodic Inform Interval</label><input id="f-int" class="form-control" type="text" value="43200"></div>
            </form>
          </div>
        </div>
        <div class="scroll d-flex flex-column align-items-center" aria-hidden="true">
          <svg width="12" height="9"><use href="#i-up"/></svg><div class="scroll-track"><div class="thumb thumb-half"></div></div><svg width="12" height="10"><use href="#i-down"/></svg>
        </div>
      </div>
    </section>
  </main>

  <footer class="taskbar d-flex align-items-center flex-shrink-0">
    <div class="task-end d-flex">
      <button class="bare widgets" aria-label="Widgets"><svg width="30" height="28"><rect width="30" height="28" rx="2" fill="#0a66b8"/><rect x="2.500" y="2.500" width="12" height="23" rx="1.500" fill="#f6f6f6"/><rect x="16.500" y="2.500" width="11" height="12.500" rx="1" fill="#63d0ff"/><rect x="16.500" y="15.500" width="11" height="5" fill="#2aa2f7"/><rect x="16.500" y="21" width="11" height="4.500" rx="1" fill="#0a84ea"/></svg></button>
    </div>
    <button class="bare start-cell" aria-label="Start"><svg width="30" height="30"><path d="M0 1q0-1 1-1h13v14H0zM15.500 0H29q1 0 1 1v13H15.500zM0 15.500h14V30H1q-1 0-1-1zM15.500 15.500H30V29q0 1-1 1H15.500z" fill="url(#gWin)"/></svg></button>
    <label class="task-search d-flex align-items-center">
      <svg width="20" height="20" fill="none" stroke="currentColor" stroke-width="2"><circle cx="12" cy="8" r="6.500"/><path d="M7.500 13L2 18.500"/></svg>
      <input type="text" placeholder="Search" aria-label="Search">
      <svg width="66" height="36">
        <path d="M3 15Q6 3 22 3h18q14 2 16 18l-4 12H8L5 24l-2-2z" fill="url(#gMoon)"/><circle cx="34" cy="20" r="14" fill="#fce9a6"/>
        <path d="M2 33q30-4 60 0l-8 2H10z" fill="#7e8f5d"/>
        <path d="M24 13l3 4h4l3-3v6c3-9 7-15 14-15 6 0 9 5 8 12l1 9 0 7h-3l-4-9-2 9h-3l-1-12-5 2-1 10h-3l-2-6-1 6h-3l-1-9-4-4z" fill="#1d232b"/><path d="M54 17q6-4 3-9-1-4 3-4 4 2 1 9-1 3 1 6" fill="none" stroke="#1d232b" stroke-width="2"/>
        <path d="M26 21h2M30 22h2" stroke="#f5b82e" stroke-width="2"/><g fill="#fff"><circle cx="16" cy="8" r="1"/><circle cx="11" cy="15" r="1"/><circle cx="15" cy="21" r="1"/><circle cx="7" cy="25" r="1"/></g>
      </svg>
    </label>
    <div class="d-flex">
      <button class="bare app" aria-label="Task view"><svg width="30" height="30"><rect y="9" width="23" height="20" rx="1" fill="#5d6063"/><rect x="7" y="2" width="23" height="20" rx="1" fill="#f1f1f1"/><path d="M7 9h16v13H7z" fill="#b4b4b4"/></svg></button>
      <button class="bare app" aria-label="Chat"><svg width="30" height="30"><path d="M15 1a14 14 0 1 1-5 27L1 29l1-8A14 14 0 0 1 15 1z" fill="url(#gChat)"/><rect x="7" y="9.500" width="12" height="11" rx="1.500" fill="#fff"/><path d="M20 13l4-3v10l-4-3z" fill="#fff"/></svg></button>
      <button class="bare app running" aria-label="File Explorer"><svg width="30" height="30"><path d="M0 3q0-1 1-1h8l4 3h16v9H0z" fill="#d99a0a"/><path d="M0 8l12 0 3-2h14q1 0 1 1v20q0 1-1 1H0z" fill="url(#gFolder)"/><path d="M5 28v-5q0-2 2-2h16q2 0 2 2v5z" fill="#1477cf"/><path d="M9 24.500h12" stroke="#0c4f93" stroke-width="1.500"/></svg></button>
      <button class="bare app" aria-label="Firefox"><svg width="30" height="30"><path d="M4 6l2 2 2-3 2 4q3-2 5-2 2-4 4-6 2 5 4 6l1-1q5 5 5 11a14 13 0 0 1-28 0Q1 11 4 6z" fill="url(#gFox)"/><circle cx="15" cy="16" r="6" fill="#7a35d8"/><path d="M5 9q7-1 10 4-5 0-6 5-4-4-4-9z" fill="#ffa322"/></svg></button>
      <button class="bare app" aria-label="Edge"><svg width="30" height="30"><circle cx="15" cy="15" r="15" fill="#1674c9"/><path d="M0 13A15 15 0 0 1 30 14c0 5-4 7-8 7-3 0-5-1-4-3 1-1 2-2 1-5C17 7 5 6 0 13z" fill="url(#gEdge)"/><path d="M12 12c-5 4-3 15 7 17 5 0 9-4 9-6-6 3-16 1-14-8z" fill="#0e4f97"/><path d="M17.500 19c-3-2-3-5-1-7 3 1 3 4 1 7z" fill="#1c2a33"/></svg></button>
      <button class="bare app" aria-label="Store"><svg width="30" height="30"><path d="M8 7V2h14v5" fill="none" stroke="#35aee8" stroke-width="2"/><path d="M1 6h28v20q0 4-4 4H5q-4 0-4-4z" fill="#f2f2f2"/><path d="M10 12h5v5h-5z" fill="#f25022"/><path d="M16 12h5v5h-5z" fill="#7fba00"/><path d="M10 18h5v5h-5z" fill="#00a4ef"/><path d="M16 18h5v5h-5z" fill="#ffb900"/></svg></button>
      <button class="bare app" aria-label="XAMPP"><svg width="30" height="30"><rect width="30" height="30" rx="2" fill="#ec762b"/><path d="M11 12q-5-1-4-4t5-1l3 3 3-3q4-2 5 1t-4 4q-2 3 0 6 5 1 4 4t-5 1l-3-3-3 3q-4 2-5-1t4-4q2-3 0-6z" fill="none" stroke="#fff" stroke-width="3"/></svg></button>
      <button class="bare app" aria-label="Network globe"><svg width="28" height="28"><circle cx="14" cy="14" r="13.500" fill="#2a62bd"/><path d="M3 7q4-6 9-6l2 4-4 4-2 6-6-2zM19 4l6 6v7l-4 1-3-5 1-4zM8 16l8 2-1 7q-6 3-8-4z" fill="#4fae3c"/><ellipse cx="15" cy="6" rx="6" ry="4" fill="#bfe6f2" opacity=".6"/></svg></button>
      <button class="bare app" aria-label="Hero tool"><svg width="30" height="28"><path d="M0 17l2-3 3-4 3 2-2 6 2 4 1 4-3-1-2-3-3 2zM20 13l4-3 2 5 4 3-2 3 1 2-5 3-3-5-6 2-3-2 6-3z" fill="#e80b0b"/><path d="M6 13l2 7 5 2 6-2 2-7z" fill="#fff36b" stroke="#000" stroke-width=".6"/><path d="M8 9l3-7h9l3 6-2 3H9z" fill="#777" stroke="#000"/><circle cx="13" cy="11" r="3.500" fill="#fff" stroke="#000"/><circle cx="18.500" cy="11" r="3" fill="#fff" stroke="#000"/><path d="M11 18q4 2 8-1M23 25l4 2" stroke="#000" fill="none" stroke-width="1.500"/></svg></button>
      <button class="bare app" aria-label="Projector"><svg width="30" height="30"><rect x="1" y="1" width="26" height="17" fill="#7c7800" stroke="#000" stroke-width="1.500"/><rect x="6" y="6" width="21" height="12" fill="#fff"/><path d="M13 18v10M4 28.500h24" stroke="#000" stroke-width="1.500"/></svg></button>
      <button class="bare app running" aria-label="Remote access"><svg width="30" height="30"><rect width="30" height="30" rx="1.500" fill="#14708f"/><path d="M8 22h12l6 8H14z" fill="#0e566f"/><path d="M5 7h20v12H5z" fill="#5f9fba"/><path d="M4 8h17v10H4z" fill="#8fc0d6"/><rect x="17" y="11" width="8" height="11" fill="#c3e0ec"/><path d="M9 20h7v2H9z" fill="#e8f4f9"/><rect x="10" y="11" width="6" height="5" fill="#14708f"/><path d="M11.500 11V9.500q1.500-1.500 3 0V11" fill="none" stroke="#14708f"/></svg></button>
      <button class="bare app running focused" aria-label="Chrome"><span class="focus-plate"></span><svg width="36" height="36" viewBox="0 0 36 36"><circle cx="18" cy="18" r="15" fill="#fbc116"/><path d="M18 18L5 10.500A15 15 0 0 1 31 10.500H18z" fill="#e33b2e"/><path d="M18 18l-6.500 3.700L5 10.500A15 15 0 0 0 18 33l6.500-11.300z" fill="#1f9d4d"/><circle cx="18" cy="18" r="7" fill="#fff"/><circle cx="18" cy="18" r="5.700" fill="#2f7cf0"/><circle cx="27" cy="9" r="9" fill="#5767bf"/><text x="27" y="13" text-anchor="middle" font-family="Roboto" font-size="12" fill="#dfe3ff">S</text></svg></button>
      <button class="bare app running" aria-label="Tera Term"><svg width="30" height="28"><rect x="4" y="1" width="22" height="17" fill="#bdbdbd"/><rect x="6" y="3" width="18" height="14" fill="#ffee1c"/><path d="M4 19h22l3 7H1z" fill="#cfcfcf"/><path d="M6 20h18l1 2H5z" fill="#8d8d8d"/><text x="15" y="15.500" text-anchor="middle" font-family="Liberation Sans" font-size="15" font-weight="700" fill="#1212d8">T</text></svg></button>
      <button class="bare app running" aria-label="Notepad"><svg width="22" height="30"><rect y="2" width="22" height="28" rx="1.500" fill="#5fc6e4"/><path d="M0 26h22v2H0z" fill="#fff"/><path d="M0 28h22v2H0z" fill="#b05f1e"/><path d="M4 10h14M4 15h14M4 20h14" stroke="#14637f" stroke-width="1.800"/><path d="M3.500 0v4M8.500 0v4M13.500 0v4M18.500 0v4" stroke="#14637f" stroke-width="2.500"/></svg></button>
      <button class="bare app running" aria-label="Settings"><svg width="30" height="30"><path d="M11 1h8l1 4 3 2 4-1 3 7-3 2 3 3-3 7-4-1-3 2-1 4h-8l-1-4-3-2-4 1-3-7 3-3-3-2 3-7 4 1 3-2z" fill="#7d868e"/><circle cx="15" cy="15" r="7" fill="#dfe6ea"/><circle cx="15" cy="15" r="5.500" fill="#0e5fae"/></svg></button>
      <button class="bare app running" aria-label="Command prompt"><svg width="28" height="24"><rect x=".5" y="1.500" width="27" height="21" fill="#050505" stroke="#9b9b9b"/><path d="M1 2h26v2H1z" fill="#d0d0d0"/><path d="M3 6.500h3M3 9h3M7.500 6v1M7.500 8.500v1M9 5.500l3 4M12 9.500h6" stroke="#c8c8c8"/></svg></button>
      <button class="bare app running" aria-label="Slack"><svg width="30" height="30"><circle cx="15" cy="15" r="14.500" fill="#fff"/><g stroke-width="3.600" stroke-linecap="round"><path d="M12.700 6.500v.1M6.500 12.700h6.200" stroke="#36c5f0"/><path d="M17.300 6.500v6.200M23.500 12.700v-.1" stroke="#2eb67d"/><path d="M17.300 23.500v-.1M17.300 17.300h6.200" stroke="#ecb22e"/><path d="M12.700 17.300v6.200M6.500 17.300v.1" stroke="#e01e5a"/></g></svg></button>
    </div>
    <div class="task-end tray d-flex align-items-center">
      <button class="bare tray-first" aria-label="Hidden icons"><svg width="18" height="10"><path d="M1 9l8-8 8 8" fill="none" stroke="currentColor" stroke-width="1.300"/></svg></button>
      <button class="bare tray-gap" aria-label="Sync"><svg width="22" height="22" fill="none" stroke="currentColor" stroke-width="1.300"><path d="M2 10q1-8 9-8 5 0 8 4M19.500 1.500V7H14M2 20v-5h5M2 15q3 4 9 5"/><circle cx="16" cy="16" r="5" fill="#f00" stroke="none"/></svg></button>
      <button class="bare" aria-label="Network"><svg width="22" height="22" fill="none" stroke="currentColor" stroke-width="1.300"><path d="M14 3H3q-2 0-2 2v9q0 2 2 2h12M5 20h11M8 16v4M13 16v4"/><path d="M15 2h5v6h-5zM17.500 8v12" stroke-width="1.600"/></svg></button>
      <button class="bare" aria-label="Muted"><svg width="20" height="16" fill="none" stroke="currentColor" stroke-width="1.300"><path d="M1 5.500h3L8.500 1.500v13L4 10.500H1zM12 4.500l7 7M19 4.500l-7 7"/></svg></button>
      <button class="bare" aria-label="Battery"><svg width="22" height="18"><rect x="5" y="4" width="13" height="11" rx="1.500" fill="#fff" stroke="currentColor"/><path d="M19 7.500h2v4h-2zM0 3h6v5H0z" fill="currentColor"/><path d="M1.500 0v4M4.500 0v4M3 8v8" stroke="currentColor" stroke-width="1.300"/></svg></button>
      <div class="clock">2:02 PM<br>3/16/2026</div>
    </div>
  </footer>
</div>
</body>
</html>
